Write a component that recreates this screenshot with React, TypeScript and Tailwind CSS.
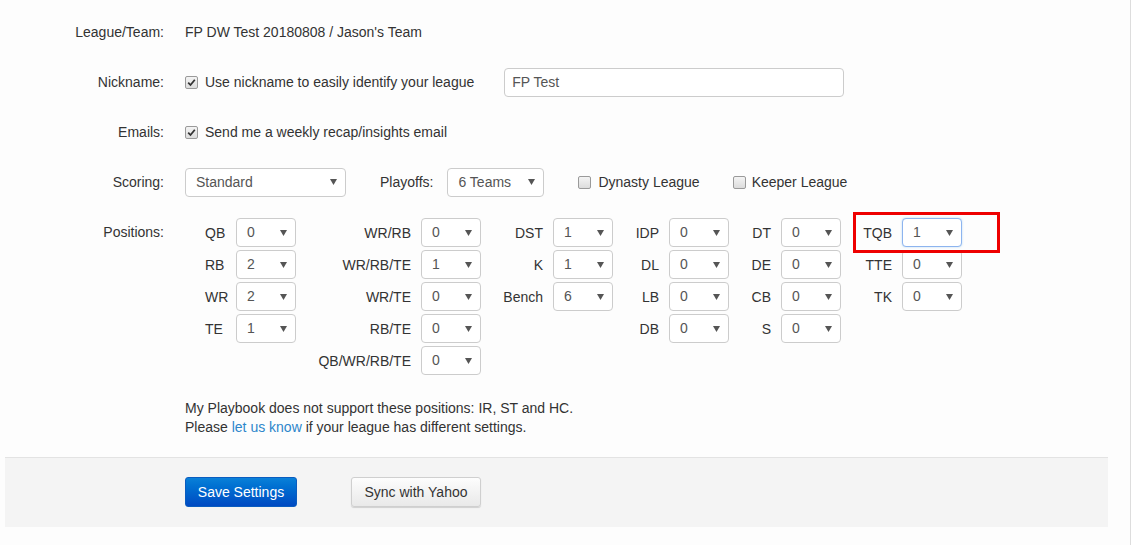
import React from "react";

const font = { fontFamily: '"Liberation Sans", Arial, sans-serif' };

function Arrow() {
  return (
    <svg width="7" height="6" viewBox="0 0 7 6" className="shrink-0">
      <path d="M0 0 L7 0 L3.5 6 Z" fill="#555" />
    </svg>
  );
}

function Select({ value, w, focus }: { value: string; w: string; focus?: boolean }) {
  return (
    <div
      className={`${w} h-[29px] rounded-[4px] border flex items-center justify-between pl-[10px] pr-[8px] bg-white text-[14px] text-[#555] ${
        focus ? "border-[#8db4ef] shadow-[0_0_2px_rgba(102,175,233,0.5)]" : "border-[#cccccc]"
      }`}
    >
      <span>{value}</span>
      <Arrow />
    </div>
  );
}

function Checkbox({ checked }: { checked?: boolean }) {
  return (
    <span className="w-[13px] h-[13px] rounded-[2px] border border-[#9a9a9a] bg-gradient-to-b from-[#f4f4f4] to-[#dcdcdc] flex items-center justify-center shrink-0">
      {checked && (
        <svg width="9" height="9" viewBox="0 0 9 9">
          <path d="M1.2 4.6 L3.5 7 L7.8 1.8" stroke="#333" strokeWidth="1.8" fill="none" />
        </svg>
      )}
    </span>
  );
}

type Cell = { label: string; value: string; focus?: boolean } | null;

const rows: Cell[][] = [
  [
    { label: "QB", value: "0" },
    { label: "WR/RB", value: "0" },
    { label: "DST", value: "1" },
    { label: "IDP", value: "0" },
    { label: "DT", value: "0" },
    { label: "TQB", value: "1", focus: true },
  ],
  [
    { label: "RB", value: "2" },
    { label: "WR/RB/TE", value: "1" },
    { label: "K", value: "1" },
    { label: "DL", value: "0" },
    { label: "DE", value: "0" },
    { label: "TTE", value: "0" },
  ],
  [
    { label: "WR", value: "2" },
    { label: "WR/TE", value: "0" },
    { label: "Bench", value: "6" },
    { label: "LB", value: "0" },
    { label: "CB", value: "0" },
    { label: "TK", value: "0" },
  ],
  [
    { label: "TE", value: "1" },
    { label: "RB/TE", value: "0" },
    null,
    { label: "DB", value: "0" },
    { label: "S", value: "0" },
    null,
  ],
  [null, { label: "QB/WR/RB/TE", value: "0" }, null, null, null, null],
];

function Row({ label, children }: { label: string; children: React.ReactNode }) {
  return (
    <div className="flex items-start">
      <div className="w-[159px] h-[30px] flex items-center justify-end text-[14px] text-[#333]">{label}</div>
      <div className="ml-[21px]">{children}</div>
    </div>
  );
}

export default function App() {
  return (
    <div className="w-[1131px] h-[545px] bg-[#fdfdfd] border-r border-[#dddddd] overflow-hidden text-[#333]" style={font}>
      <div className="ml-[5px] w-[1103px] pt-[17px]">
        <div className="flex flex-col gap-[20px]">
          <Row label="League/Team:">
            <div className="h-[30px] flex items-center text-[14px]">FP DW Test 20180808 / Jason's Team</div>
          </Row>
          <Row label="Nickname:">
            <div className="h-[30px] flex items-center text-[14px]">
              <Checkbox checked />
              <span className="ml-[7px]">Use nickname to easily identify your league</span>
              <div className="ml-[30px] w-[340px] h-[29px] mt-[1px] rounded-[4px] border border-[#cccccc] bg-white flex items-center pl-[7px] text-[#555]">
                FP Test
              </div>
            </div>
          </Row>
          <Row label="Emails:">
            <div className="h-[30px] flex items-center text-[14px]">
              <Checkbox checked />
              <span className="ml-[7px]">Send me a weekly recap/insights email</span>
            </div>
          </Row>
          <Row label="Scoring:">
            <div className="h-[30px] flex items-center text-[14px]">
              <Select value="Standard" w="w-[161px]" />
              <span className="ml-[34px]">Playoffs:</span>
              <div className="ml-[14px]">
                <Select value="6 Teams" w="w-[97px]" />
              </div>
              <span className="ml-[34px]"><Checkbox /></span>
              <span className="ml-[7px]">Dynasty League</span>
              <span className="ml-[33px]"><Checkbox /></span>
              <span className="ml-[6px]">Keeper League</span>
            </div>
          </Row>
          <Row label="Positions:">
            <div className="relative mt-[1px]">
              <div className="grid grid-cols-[51px_60px_125px_60px_72px_60px_56px_60px_52px_60px_61px_60px] gap-y-[3px] auto-rows-[29px] text-[14px]">
                {rows.map((r, ri) =>
                  r.map((c, ci) => {
                    const key = `${ri}-${ci}`;
                    if (!c)
                      return (
                        <React.Fragment key={key}>
                          <div />
                          <div />
                        </React.Fragment>
                      );
                    return (
                      <React.Fragment key={key}>
                        <div
                          className={`flex items-center pt-[1px] ${
                            ci === 0 ? "pl-[20px] justify-start" : "justify-end pr-[10px]"
                          }`}
                        >
                          {c.label}
                        </div>
                        <Select value={c.value} w="w-[60px]" focus={c.focus} />
                      </React.Fragment>
                    );
                  })
                )}
              </div>
              <div className="absolute left-[668px] top-[-6px] w-[147px] h-[41px] border-[3px] border-[#ee0000] pointer-events-none" />
            </div>
          </Row>
        </div>

        <div className="ml-[180px] mt-[24px] text-[14px] leading-[19px]">
          <div>My Playbook does not support these positions: IR, ST and HC.</div>
          <div>
            Please <span className="text-[#2d86cb]">let us know</span> if your league has different settings.
          </div>
        </div>

        <div className="mt-[20px] border-t border-[#e3e3e3] bg-[#f4f4f4] h-[70px] pt-[19px] flex items-start">
          <div className="ml-[180px] w-[112px] h-[30px] rounded-[3px] border border-[#0a5cbf] bg-gradient-to-b from-[#0a80d8] to-[#0049c2] text-white text-[14px] flex items-center justify-center">
            Save Settings
          </div>
          <div className="ml-[54px] w-[130px] h-[30px] rounded-[3px] border border-[#cfcfcf] bg-gradient-to-b from-[#fdfdfd] to-[#e9e9e9] shadow-[0_1px_1px_rgba(0,0,0,0.15)] text-[#333] text-[14px] flex items-center justify-center">
            Sync with Yahoo
          </div>
        </div>
      </div>
    </div>
  );
}
